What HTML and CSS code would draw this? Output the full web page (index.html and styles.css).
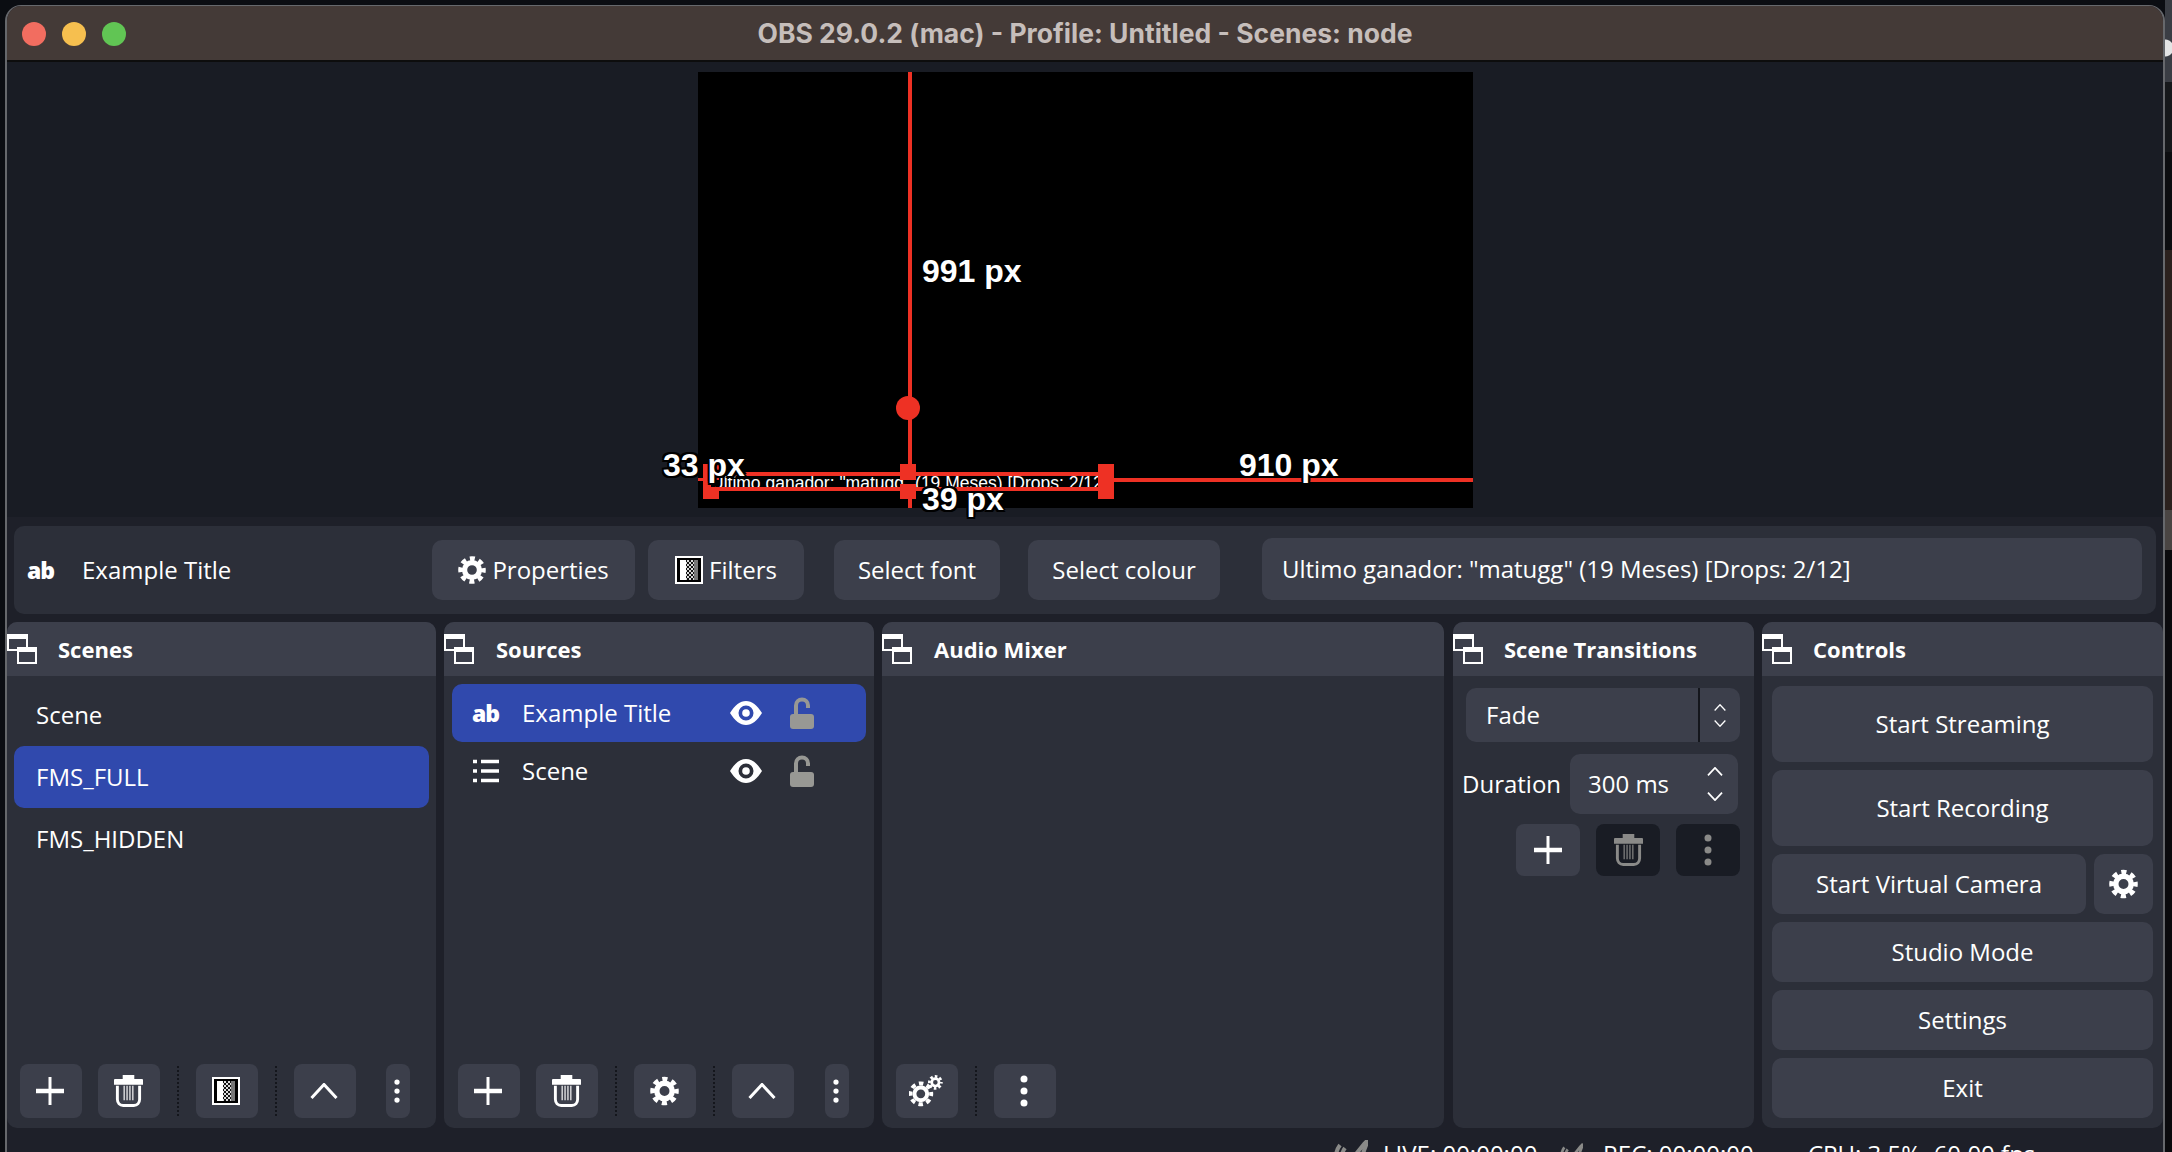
FILE: index.html
```html
<!DOCTYPE html>
<html lang="en">
<head>
  <meta charset="UTF-8"/>
  <title>OBS 29.0.2 (mac) - Profile: Untitled - Scenes: node</title>
  <link rel="stylesheet" href="styles.css">
</head>
<body>
  <svg class="defs" width="0" height="0">
    <symbol id="i-gear" viewBox="0 0 32 32">
      <circle cx="16" cy="16" r="8.5" fill="none" stroke="currentColor" stroke-width="6"/>
      <circle cx="16" cy="16" r="13" fill="none" stroke="currentColor" stroke-width="5.5" stroke-dasharray="5.6 4.61" stroke-dashoffset="2.8"/>
    </symbol>
    <symbol id="i-gears" viewBox="0 0 34 32">
      <g transform="translate(-1 6) scale(.8)">
        <circle cx="16" cy="16" r="8" fill="none" stroke="currentColor" stroke-width="5"/>
        <circle cx="16" cy="16" r="13" fill="none" stroke="currentColor" stroke-width="5" stroke-dasharray="5.6 4.61" stroke-dashoffset="2.8"/>
      </g>
      <g transform="translate(19 0) scale(.46)">
        <circle cx="16" cy="16" r="8" fill="none" stroke="currentColor" stroke-width="6"/>
        <circle cx="16" cy="16" r="13" fill="none" stroke="currentColor" stroke-width="6" stroke-dasharray="5.6 4.61" stroke-dashoffset="2.8"/>
      </g>
    </symbol>
    <symbol id="i-plus" viewBox="0 0 28 28">
      <path d="M0 14h28" stroke="currentColor" stroke-width="4.5"/>
      <path d="M14 0v28" stroke="currentColor" stroke-width="3"/>
    </symbol>
    <symbol id="i-trash" viewBox="0 0 30 33">
      <path d="M9 0h12v4h8a1 1 0 0 1 1 1v5H0V5a1 1 0 0 1 1-1h8z" fill="currentColor"/>
      <path d="M3.5 11v14c0 4 2.500 6.500 6 6.500h11c3.500 0 6-2.500 6-6.500V11" fill="none" stroke="currentColor" stroke-width="3"/>
      <path d="M10.500 11v15M13.500 11v15M16.500 11v15M19.500 11v15" stroke="currentColor" stroke-width="1.200"/>
    </symbol>
    <symbol id="i-filter" viewBox="0 0 28 28">
      <defs>
        <pattern id="checks" width="4" height="4" patternUnits="userSpaceOnUse">
          <rect width="4" height="4" fill="#111"/>
          <rect width="2" height="2" fill="#ddd"/>
          <rect x="2" y="2" width="2" height="2" fill="#ddd"/>
        </pattern>
      </defs>
      <rect x="1" y="1" width="26" height="26" fill="#000" stroke="#fff" stroke-width="2"/>
      <rect x="5" y="4" width="6" height="20" fill="#fff"/>
      <rect x="11" y="4" width="8" height="20" fill="url(#checks)"/>
      <rect x="19" y="4" width="4" height="20" fill="#777"/>
    </symbol>
    <symbol id="i-up" viewBox="0 0 28 16">
      <path d="M1.500 15 14 1.500 26.500 15" fill="none" stroke="currentColor" stroke-width="3"/>
    </symbol>
    <symbol id="i-dots" viewBox="0 0 8 32">
      <circle cx="4" cy="4" r="3.500" fill="currentColor"/>
      <circle cx="4" cy="16" r="3.500" fill="currentColor"/>
      <circle cx="4" cy="28" r="3.500" fill="currentColor"/>
    </symbol>
    <symbol id="i-float" viewBox="0 0 30 30">
      <rect x="1" y="1" width="19" height="15" fill="none" stroke="#fff" stroke-width="2"/>
      <rect x="1" y="1" width="19" height="4" fill="#fff"/>
      <rect x="11" y="14" width="18" height="15" fill="#3c3f4b" stroke="#fff" stroke-width="2"/>
      <rect x="11" y="14" width="18" height="4" fill="#fff"/>
    </symbol>
    <symbol id="i-eye" viewBox="0 0 32 24">
      <path fill-rule="evenodd" fill="currentColor" d="M0 12C5 4 10 0 16 0s11 4 16 12c-5 8-10 12-16 12S5 20 0 12zm16-7.500a7.500 7.500 0 1 0 0 15 7.500 7.500 0 0 0 0-15z"/>
      <circle cx="16" cy="12" r="3.800" fill="currentColor"/>
    </symbol>
    <symbol id="i-lock" viewBox="0 0 24 32">
      <path d="M6 18V8.500a6 6 0 0 1 12 0V11" fill="none" stroke="currentColor" stroke-width="4"/>
      <rect y="17" width="24" height="15" rx="3" fill="currentColor"/>
    </symbol>
    <symbol id="i-list" viewBox="0 0 26 24">
      <path d="M0 2.500h4M8 2.500h18M0 12h4M8 12h18M0 21.500h4M8 21.500h18" stroke="currentColor" stroke-width="3.500"/>
    </symbol>
    <symbol id="i-mute" viewBox="0 0 36 24">
      <path d="M4 22C3 14 5 9 8 5M10 22c-1-6 0-10 3-14M16 24l16-20 4-4-6 16-6 8z" fill="none" stroke="currentColor" stroke-width="4"/>
    </symbol>
  </svg>

  <div class="window">
    <header class="titlebar">
      <div class="lights">
        <span class="light red"></span>
        <span class="light yellow"></span>
        <span class="light green"></span>
      </div>
      <span class="title">OBS 29.0.2 (mac) - Profile: Untitled - Scenes: node</span>
    </header>

    <section class="preview">
      <div class="canvas">
        <!-- overlay positions are relative to the canvas, like the real preview -->
        <div class="source-text"><span>Ultimo ganador: "matugg" (19 Meses) [Drops: 2/12]</span></div>
        <i class="red guide-top"></i>
        <i class="red guide-bottom"></i>
        <i class="red guide-left"></i>
        <i class="red guide-right"></i>
        <i class="red box-top"></i>
        <i class="red box-bottom"></i>
        <i class="red box-left"></i>
        <i class="red handle-tl"></i>
        <i class="red handle-bl"></i>
        <i class="red handle-tm"></i>
        <i class="red handle-bm"></i>
        <i class="red handle-r"></i>
        <i class="red rotate"></i>
        <span class="px px-top">991 px</span>
        <span class="px px-left">33 px</span>
        <span class="px px-bottom">39 px</span>
        <span class="px px-right">910 px</span>
      </div>
    </section>

    <section class="context">
      <div class="context-name">
        <span class="ab">ab</span>
        <span>Example Title</span>
      </div>
      <button class="btn btn-props"><svg class="ico-ctx"><use href="#i-gear"/></svg>Properties</button>
      <button class="btn btn-filters"><svg class="ico-ctx"><use href="#i-filter"/></svg>Filters</button>
      <button class="btn btn-font">Select font</button>
      <button class="btn btn-colour">Select colour</button>
      <div class="text-field">Ultimo ganador: "matugg" (19 Meses) [Drops: 2/12]</div>
    </section>

    <main class="docks">
      <section class="dock dock-scenes">
        <div class="dock-head"><svg class="ico-float"><use href="#i-float"/></svg><span>Scenes</span></div>
        <div class="dock-body scene-list">
          <div class="scene-row">Scene</div>
          <div class="scene-row active">FMS_FULL</div>
          <div class="scene-row">FMS_HIDDEN</div>
        </div>
        <div class="dock-foot">
          <button class="tool"><svg class="ico-plus"><use href="#i-plus"/></svg></button>
          <button class="tool"><svg class="ico-trash"><use href="#i-trash"/></svg></button>
          <i class="sep"></i>
          <button class="tool"><svg class="ico-filter"><use href="#i-filter"/></svg></button>
          <i class="sep"></i>
          <button class="tool"><svg class="ico-up"><use href="#i-up"/></svg></button>
          <button class="tool narrow"><svg class="ico-dots-sm"><use href="#i-dots"/></svg></button>
        </div>
      </section>

      <section class="dock dock-sources">
        <div class="dock-head"><svg class="ico-float"><use href="#i-float"/></svg><span>Sources</span></div>
        <div class="dock-body source-list">
          <div class="source-row active">
            <span class="ab">ab</span>
            <span class="source-name">Example Title</span>
            <svg class="ico-eye"><use href="#i-eye"/></svg>
            <svg class="ico-lock"><use href="#i-lock"/></svg>
          </div>
          <div class="source-row">
            <svg class="ico-list"><use href="#i-list"/></svg>
            <span class="source-name">Scene</span>
            <svg class="ico-eye"><use href="#i-eye"/></svg>
            <svg class="ico-lock"><use href="#i-lock"/></svg>
          </div>
        </div>
        <div class="dock-foot">
          <button class="tool"><svg class="ico-plus"><use href="#i-plus"/></svg></button>
          <button class="tool"><svg class="ico-trash"><use href="#i-trash"/></svg></button>
          <i class="sep"></i>
          <button class="tool"><svg class="ico-gear"><use href="#i-gear"/></svg></button>
          <i class="sep"></i>
          <button class="tool"><svg class="ico-up"><use href="#i-up"/></svg></button>
          <button class="tool narrow"><svg class="ico-dots-sm"><use href="#i-dots"/></svg></button>
        </div>
      </section>

      <section class="dock dock-audio">
        <div class="dock-head"><svg class="ico-float"><use href="#i-float"/></svg><span>Audio Mixer</span></div>
        <div class="dock-body"></div>
        <div class="dock-foot">
          <button class="tool"><svg class="ico-gears"><use href="#i-gears"/></svg></button>
          <i class="sep"></i>
          <button class="tool"><svg class="ico-dots"><use href="#i-dots"/></svg></button>
        </div>
      </section>

      <section class="dock dock-trans">
        <div class="dock-head"><svg class="ico-float"><use href="#i-float"/></svg><span>Scene Transitions</span></div>
        <div class="dock-body trans-body">
          <div class="combo">
            <span class="combo-text">Fade</span>
            <span class="combo-arrows">
              <svg class="chev-sm"><use href="#i-up"/></svg>
              <svg class="chev-sm flip"><use href="#i-up"/></svg>
            </span>
          </div>
          <div class="duration">
            <span class="duration-label">Duration</span>
            <div class="spin">
              <span>300 ms</span>
              <span class="spin-arrows">
                <svg class="chev"><use href="#i-up"/></svg>
                <svg class="chev flip"><use href="#i-up"/></svg>
              </span>
            </div>
          </div>
          <div class="trans-tools">
            <button class="tool"><svg class="ico-plus"><use href="#i-plus"/></svg></button>
            <button class="tool off"><svg class="ico-trash"><use href="#i-trash"/></svg></button>
            <button class="tool off"><svg class="ico-dots"><use href="#i-dots"/></svg></button>
          </div>
        </div>
      </section>

      <section class="dock dock-controls">
        <div class="dock-head"><svg class="ico-float"><use href="#i-float"/></svg><span>Controls</span></div>
        <div class="dock-body control-list">
          <button class="btn tall">Start Streaming</button>
          <button class="btn tall">Start Recording</button>
          <div class="control-pair">
            <button class="btn grow">Start Virtual Camera</button>
            <button class="btn cam-gear"><svg class="ico-gear"><use href="#i-gear"/></svg></button>
          </div>
          <button class="btn">Studio Mode</button>
          <button class="btn">Settings</button>
          <button class="btn">Exit</button>
        </div>
      </section>
    </main>

    <footer class="status">
      <svg class="ico-mute"><use href="#i-mute"/></svg>
      <span class="live">LIVE: 00:00:00</span>
      <svg class="ico-rec"><use href="#i-mute"/></svg>
      <span class="rec">REC: 00:00:00</span>
      <span class="cpu">CPU: 3.5%, 60.00 fps</span>
    </footer>
  </div>

  <div class="desktop-edge">
    <i class="edge-a"></i><i class="edge-b"></i><i class="edge-c"></i><i class="edge-d"></i><i class="edge-e"></i><i class="edge-f"></i>
  </div>
</body>
</html>
```

FILE: styles.css
```css
* { box-sizing: border-box; }
html, body { margin: 0; height: 1152px; overflow: hidden; }
body { display: flex; background: #0b0d12; font-family: "Open Sans", sans-serif; font-size: 24px; line-height: 32px; color: #fff; }
.defs { position: absolute; }
svg { display: block; flex: none; }
button { font: inherit; color: inherit; border: none; padding: 0; }

.window { width: 2160px; height: 1147px; margin: 5px 0 0 5px; display: flex; flex-direction: column; overflow: hidden; background: #1e2029; border: 1px solid #66686c; border-bottom: none; border-width: 1px 2px 0 2px; border-radius: 16px 16px 0 0; }

.titlebar { height: 56px; flex: none; display: flex; align-items: center; justify-content: center; position: relative; padding-bottom: 1px; background: #443a37; border-bottom: 2px solid #0d0d0d; }
.lights { position: absolute; left: 15px; top: 16px; display: flex; gap: 16px; }
.light { width: 24px; height: 24px; border-radius: 50%; }
.red { background: #f26d60; }
.yellow { background: #f6bf4f; }
.green { background: #61c554; }
.title { font-family: Inter, sans-serif; font-weight: 700; font-size: 26.5px; color: #c6bebb; }

.preview { height: 455px; flex: none; display: flex; justify-content: center; padding-top: 10px; background: #191c24; }
.canvas { width: 775px; height: 436px; margin-left: 1px; position: relative; background: #000; }
.canvas .red { position: absolute; display: block; background: #ee3124; }
.guide-top { left: 210px; top: 0; width: 4px; height: 392px; }
.guide-bottom { left: 210px; top: 427px; width: 4px; height: 9px; }
.guide-left { left: 0; top: 406px; width: 6px; height: 3px; }
.guide-right { left: 416px; top: 406px; width: 359px; height: 4px; }
.box-top { left: 5px; top: 400px; width: 396px; height: 4px; }
.box-bottom { left: 5px; top: 415px; width: 396px; height: 4px; }
.box-left { left: 5px; top: 392px; width: 8px; height: 30px; }
.handle-tl { left: 5px; top: 392px; width: 16px; height: 16px; }
.handle-bl { left: 5px; top: 415px; width: 16px; height: 12px; }
.handle-tm { left: 202px; top: 392px; width: 16px; height: 16px; }
.handle-bm { left: 202px; top: 412px; width: 16px; height: 15px; }
.handle-r { left: 400px; top: 392px; width: 16px; height: 35px; }
.canvas .rotate { left: 198px; top: 324px; width: 24px; height: 24px; border-radius: 50%; }
.source-text { position: absolute; left: 17px; top: 402px; width: 383px; height: 14px; overflow: hidden; font-family: "Liberation Sans", Arial, sans-serif; font-size: 17.5px; line-height: 18px; white-space: nowrap; }
.source-text span { display: block; margin-left: -4px; }
.px { position: absolute; font-family: "Liberation Sans", Arial, sans-serif; font-weight: 700; font-size: 32px; line-height: 34px; white-space: nowrap; text-shadow: -2px 0 #000, 2px 0 #000, 0 -2px #000, 0 2px #000, -2px -2px #000, 2px 2px #000, -2px 2px #000, 2px -2px #000; }
.px-top { left: 224px; top: 182px; }
.px-left { left: -35px; top: 376px; }
.px-bottom { left: 224px; top: 410px; }
.px-right { left: 541px; top: 376px; }

.context { height: 88px; flex: none; margin: 9px 7px 0 7px; padding-left: 13px; display: flex; align-items: center; background: #2c2f39; border-radius: 10px; }
.context-name { width: 405px; flex: none; display: flex; align-items: center; }
.context-name .ab { width: 55px; }
.ab { font-weight: 800; font-size: 23px; letter-spacing: -1px; line-height: 1; }

.btn { height: 60px; display: flex; align-items: center; justify-content: center; flex: none; background: #3c3f4b; border-radius: 10px; }
.btn-props { width: 203px; }
.btn-filters { width: 156px; margin-left: 13px; }
.btn-font { width: 166px; margin-left: 30px; }
.btn-colour { width: 192px; margin-left: 28px; }
.ico-ctx { width: 28px; height: 28px; margin-right: 6px; }
.text-field { height: 62px; width: 880px; margin: 0 0 2px 42px; padding-left: 20px; display: flex; align-items: center; background: #3c3f4b; border-radius: 10px; }

.docks { height: 506px; flex: none; margin-top: 8px; display: flex; gap: 8px; }
.dock { display: flex; flex-direction: column; background: #2c2f39; border-radius: 10px; }
.dock-scenes { width: 429px; }
.dock-sources { width: 430px; }
.dock-audio { width: 562px; }
.dock-trans { width: 301px; margin-left: 1px; }
.dock-controls { width: 401px; }
.dock-head { height: 54px; flex: none; display: flex; align-items: center; font-weight: 700; font-size: 22px; background: #3c3f4b; border-radius: 10px 10px 0 0; }
.dock-head span { margin-left: 21px; }
.dock-sources .dock-head span, .dock-audio .dock-head span { margin-left: 22px; }
.ico-float { width: 30px; height: 30px; }
.dock-body { flex: 1; }
.dock-foot { flex: none; height: 64px; padding: 0 0 10px 14px; display: flex; align-items: center; gap: 16px; }
.dock-scenes .dock-foot { padding-left: 13px; }
.dock-foot .tool { padding-right: 2px; }

.tool { width: 62px; height: 54px; flex: none; display: flex; align-items: center; justify-content: center; background: #3c3f4b; border-radius: 8px; }
.tool.narrow { width: 24px; margin-left: 14px; }
.dock-sources .tool.narrow { margin-left: 15px; }
.tool.off { background: #191c24; color: #8a8a88; }
.sep { width: 2px; height: 50px; margin: 0 1px; border-left: 2px dotted #14161c; }
.ico-plus { width: 28px; height: 28px; }
.ico-trash { width: 29px; height: 32px; }
.ico-filter { width: 28px; height: 28px; }
.ico-gear { width: 29px; height: 32px; }
.ico-gears { width: 34px; height: 32px; }
.ico-up { width: 28px; height: 16px; }
.ico-dots-sm { width: 6px; height: 24px; }
.ico-dots { width: 8px; height: 32px; }

.scene-list { padding: 8px 7px 0; }
.scene-row { height: 62px; padding-left: 22px; padding-bottom: 1px; display: flex; align-items: center; border-radius: 10px; }
.scene-row.active { background: #3049ad; }
.source-list { padding: 8px 8px 0; }
.source-row { height: 58px; padding-left: 20px; display: flex; align-items: center; border-radius: 10px; }
.source-row.active { background: #3049ad; }
.source-row .ab { width: 26px; }
.ico-list { width: 26px; height: 24px; margin-left: 1px; margin-right: -1px; }
.source-name { width: 208px; margin-left: 24px; }
.ico-eye { width: 32px; height: 24px; }
.ico-lock { width: 24px; height: 32px; margin-left: 28px; color: #989894; }

.trans-body { display: flex; flex-direction: column; padding-top: 12px; }
.combo { width: 274px; height: 54px; margin-left: 13px; display: flex; align-items: center; background: #3c3f4b; border-radius: 10px; }
.combo-text { width: 234px; height: 100%; padding-left: 20px; display: flex; align-items: center; border-right: 2px solid #14161c; }
.combo-arrows { flex: 1; display: flex; flex-direction: column; align-items: center; gap: 9px; }
.chev-sm { width: 12px; height: 7px; }
.flip { transform: scaleY(-1); }
.duration { margin-top: 12px; padding-left: 9px; display: flex; align-items: center; }
.duration-label { width: 108px; white-space: nowrap; }
.spin { width: 168px; height: 60px; padding-left: 18px; display: flex; align-items: center; background: #3c3f4b; border-radius: 10px; }
.spin-arrows { margin-left: auto; margin-right: 15px; display: flex; flex-direction: column; gap: 16px; }
.chev { width: 16px; height: 9px; }
.trans-tools { margin-top: 10px; padding-right: 14px; display: flex; justify-content: flex-end; gap: 16px; }
.trans-tools .tool { width: 64px; height: 52px; }

.control-list { padding: 10px 10px 0; display: flex; flex-direction: column; gap: 8px; }
.control-list .btn { width: 100%; }
.control-list .btn.tall { height: 76px; }
.control-pair { display: flex; gap: 8px; }
.control-pair .btn.grow { flex: 1; width: auto; }
.control-pair .btn.cam-gear { width: 59px; }

.status { height: 40px; flex: none; position: relative; color: #fff; }
.status .live { position: absolute; left: 1376px; top: 10px; }
.status .rec { position: absolute; left: 1596px; top: 10px; }
.status .cpu { position: absolute; left: 1801px; top: 10px; }
.ico-mute { position: absolute; left: 1325px; top: 12px; width: 36px; height: 24px; color: #8a8a88; }
.ico-rec { position: absolute; left: 1552px; top: 12px; width: 24px; height: 24px; color: #8a8a88; }

.desktop-edge { width: 7px; flex: none; display: flex; flex-direction: column; }
.desktop-edge i { display: block; }
.edge-a { height: 82px; background: radial-gradient(circle at 0 48px, #e4e4e4 8px, #3a3d44 9px); }
.edge-b { height: 70px; background: #16181b; }
.edge-c { height: 98px; background: #0c0d10; }
.edge-d { height: 260px; background: #2b211e; }
.edge-e { height: 40px; background: #4a4543; }
.edge-f { flex: 1; background: #0a0a0d; }
```
